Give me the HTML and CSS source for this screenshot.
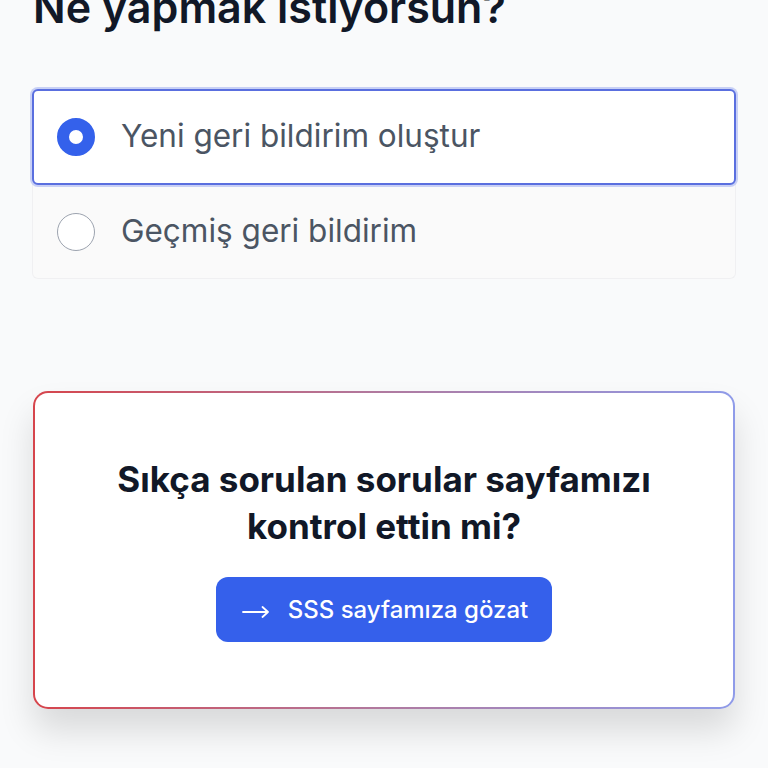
FILE: index.html
```html
<!DOCTYPE html>
<html lang="tr">
<head>
<meta charset="utf-8">
<link rel="stylesheet" href="styles.css">
</head>
<body>
<main class="page">
  <h1 class="title">Ne yapmak istiyorsun?</h1>
  <div class="options">
    <label class="option option-selected">
      <span class="radio radio-on"></span>
      <span class="option-text">Yeni geri bildirim oluştur</span>
    </label>
    <label class="option">
      <span class="radio"></span>
      <span class="option-text">Geçmiş geri bildirim</span>
    </label>
  </div>
  <section class="faq-card">
    <div class="faq-inner">
      <h2 class="faq-title">Sıkça sorulan sorular sayfamızı kontrol ettin mi?</h2>
      <a class="faq-button" href="#"><svg class="arrow" width="28" height="14" viewBox="0 0 28 14" aria-hidden="true"><path d="M1 7H26M20.5 2L26 7L20.5 12" fill="none" stroke="#ffffff" stroke-width="1.8" stroke-linecap="round" stroke-linejoin="round"/></svg><span>SSS sayfamıza gözat</span></a>
    </div>
  </section>
</main>
</body>
</html>
```

FILE: styles.css
```css
* { box-sizing: border-box; }
html, body { margin: 0; padding: 0; }
html { background: #f9fafb; }
body {
  background: #f9fafb;
  font-family: Inter, "Noto Sans", "Liberation Sans", sans-serif;
  color: #111827;
}
.page {
  padding: 0 32px 80px;
}
.title {
  margin: -19px 0 0 1px;
  font-size: 43px;
  line-height: 52px;
  font-weight: 600;
  color: #111827;
}
.options {
  margin-top: 56px;
  display: flex;
  flex-direction: column;
}
.option {
  display: flex;
  align-items: center;
  gap: 26px;
  height: 94px;
  padding: 0 24px;
  background: #fafafa;
  border: 1px solid #f0f0f2;
  border-top: none;
  border-radius: 0 0 6px 6px;
}
.option-selected {
  height: 96px;
  background: #ffffff;
  border: 2px solid #5a6fdf;
  border-radius: 6px;
  box-shadow: 0 0 0 2px rgba(110, 130, 235, 0.35);
  padding-left: 23px;
  position: relative;
  z-index: 1;
}
.radio {
  width: 38px;
  height: 38px;
  border-radius: 50%;
  border: 1.5px solid #9ca3af;
  background: #ffffff;
  flex: none;
}
.radio-on {
  border: 12.5px solid #3461eb;
  background: #ffffff;
}
.option-text {
  font-size: 31.5px;
  color: #4b5563;
  font-weight: 400;
  margin-top: -3px;
}
.faq-card {
  margin-top: 112px;
  margin-left: 1px;
  margin-right: 1px;
  padding: 2px;
  border-radius: 15px;
  background: linear-gradient(90deg, #d6454c 0%, #b07aa0 50%, #8f9be9 100%);
  box-shadow: 0 22px 34px rgba(0, 0, 0, 0.13);
}
.faq-inner {
  background: #ffffff;
  border-radius: 13px;
  padding: 63px 40px 65px;
  display: flex;
  flex-direction: column;
  align-items: center;
  gap: 27px;
}
.faq-title {
  margin: 0;
  max-width: 600px;
  text-align: center;
  font-size: 35px;
  line-height: 47px;
  font-weight: 700;
  color: #111827;
}
.faq-button {
  display: flex;
  align-items: center;
  gap: 18px;
  height: 65px;
  padding: 0 24px 0 26px;
  background: #3560eb;
  color: #ffffff;
  border-radius: 12px;
  text-decoration: none;
  font-size: 24px;
  font-weight: 500;
}
.arrow {
  flex: none;
  margin-top: 4px;
}
```
